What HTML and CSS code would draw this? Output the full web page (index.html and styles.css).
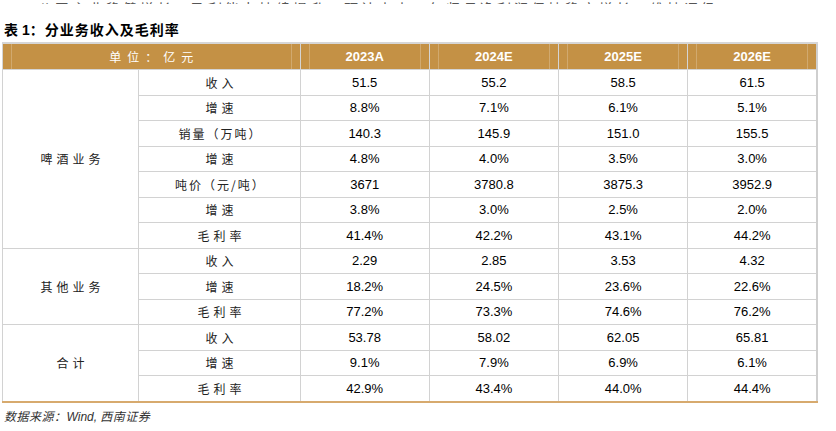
FILE: index.html
```html
<!DOCTYPE html>
<html lang="zh-CN">
<head>
<meta charset="utf-8">
<title>表 1：分业务收入及毛利率</title>
<link rel="stylesheet" href="styles.css">
</head>
<body>
<div class="clip"><p class="prev">公司主业稳健增长，盈利能力持续提升，预计未来三年归母净利润保持稳定增长，维持评级。</p></div>
<h1 class="title"><span class="num">表 1</span>：分业务收入及毛利率</h1>
<table class="tbl">
  <colgroup>
    <col class="c-cat"><col class="c-lab"><col class="c-val"><col class="c-val"><col class="c-val"><col class="c-val">
  </colgroup>
  <thead>
    <tr>
      <th colspan="2" class="unit">单位：亿元</th>
      <th>2023A</th><th>2024E</th><th>2025E</th><th>2026E</th>
    </tr>
  </thead>
  <tbody>
    <tr><td rowspan="7" class="cat">啤酒业务</td><td class="lab">收入</td><td>51.5</td><td>55.2</td><td>58.5</td><td>61.5</td></tr>
    <tr><td class="lab">增速</td><td>8.8%</td><td>7.1%</td><td>6.1%</td><td>5.1%</td></tr>
    <tr><td class="lab lab-tight">销量（万吨）</td><td>140.3</td><td>145.9</td><td>151.0</td><td>155.5</td></tr>
    <tr><td class="lab">增速</td><td>4.8%</td><td>4.0%</td><td>3.5%</td><td>3.0%</td></tr>
    <tr><td class="lab lab-tight">吨价（元/吨）</td><td>3671</td><td>3780.8</td><td>3875.3</td><td>3952.9</td></tr>
    <tr><td class="lab">增速</td><td>3.8%</td><td>3.0%</td><td>2.5%</td><td>2.0%</td></tr>
    <tr><td class="lab">毛利率</td><td>41.4%</td><td>42.2%</td><td>43.1%</td><td>44.2%</td></tr>
    <tr class="grp"><td rowspan="3" class="cat">其他业务</td><td class="lab">收入</td><td>2.29</td><td>2.85</td><td>3.53</td><td>4.32</td></tr>
    <tr><td class="lab">增速</td><td>18.2%</td><td>24.5%</td><td>23.6%</td><td>22.6%</td></tr>
    <tr><td class="lab">毛利率</td><td>77.2%</td><td>73.3%</td><td>74.6%</td><td>76.2%</td></tr>
    <tr class="grp"><td rowspan="3" class="cat last-cat">合计</td><td class="lab">收入</td><td>53.78</td><td>58.02</td><td>62.05</td><td>65.81</td></tr>
    <tr><td class="lab">增速</td><td>9.1%</td><td>7.9%</td><td>6.9%</td><td>6.1%</td></tr>
    <tr class="last"><td class="lab">毛利率</td><td>42.9%</td><td>43.4%</td><td>44.0%</td><td>44.4%</td></tr>
  </tbody>
</table>
<p class="source">数据来源：<span class="en">Wind,</span> 西南证券</p>
</body>
</html>
```
FILE: styles.css
```css
html, body {
  margin: 0;
  padding: 0;
  background: #ffffff;
}
body {
  padding: 0 2px;
  font-family: "Liberation Sans", "Noto Sans CJK SC", sans-serif;
  color: #000;
}
.clip {
  height: 4px;
  overflow: hidden;
  display: flex;
  align-items: flex-end;
  padding-left: 36px;
}
.prev {
  margin: 0;
  font-family: "Noto Sans CJK SC", sans-serif;
  font-size: 14px;
  line-height: 16px;
  letter-spacing: 3px;
  color: #555;
  white-space: nowrap;
  transform: translateY(12px);
}
.title {
  margin: 16px 0 0 2px;
  height: 22px;
  font-family: "Liberation Sans", "Noto Sans CJK SC", sans-serif;
  font-size: 14px;
  line-height: 20px;
  font-weight: bold;
  letter-spacing: 1px;
  color: #000;
}
.title .num { letter-spacing: 0; }
.tbl {
  width: 816px;
  table-layout: fixed;
  border-collapse: collapse;
  border-left: 1px solid #cfcfcf;
  border-right: 2px solid #cfcfcf;
}
.c-cat { width: 136px; }
.c-lab { width: 161px; }
.c-val { width: 129px; }
.tbl th {
  height: 25px;
  padding: 0;
  background-color: #c49145;
  background-image:
    linear-gradient(rgba(255,255,255,0.22), rgba(255,255,255,0.22)),
    linear-gradient(rgba(255,255,255,0.22), rgba(255,255,255,0.22));
  background-size: 1px 100%, 1px 100%;
  background-position: 8px 0, calc(100% - 8px) 0;
  background-repeat: no-repeat;
  color: #fff;
  font-family: "Liberation Sans", sans-serif;
  font-size: 13px;
  font-weight: bold;
  text-align: center;
  border: 1px solid #d4d4d4;
  border-top: 2px solid #d6d6d6;
}
.tbl th.unit {
  font-family: "Noto Sans CJK SC", sans-serif;
  font-weight: normal;
  font-size: 12px;
  letter-spacing: 6px;
  padding-left: 6px;
}
.tbl td {
  height: 24.5px;
  padding: 0;
  text-align: center;
  vertical-align: middle;
  font-size: 13px;
  color: #000;
  border: 1px solid #d2d2d2;
}
.tbl td.lab, .tbl td.cat {
  font-family: "Noto Sans CJK SC", sans-serif;
  font-size: 12px;
  letter-spacing: 4px;
  padding-left: 4px;
  color: #222;
}
.tbl td.lab-tight {
  letter-spacing: 2px;
  padding-left: 2px;
}
.tbl tr.grp td { border-top: 1px solid #c8c8c8; }
.tbl tr.last td, .tbl td.last-cat { border-bottom: 2px solid #d7aa6e; }
.source {
  margin: 4px 0 0 2px;
  font-family: "Noto Sans CJK SC", sans-serif;
  font-style: italic;
  font-size: 12px;
  line-height: 18px;
  letter-spacing: 0.5px;
  color: #333;
}
.source .en {
  font-family: "Liberation Sans", sans-serif;
  letter-spacing: 0;
}
```
